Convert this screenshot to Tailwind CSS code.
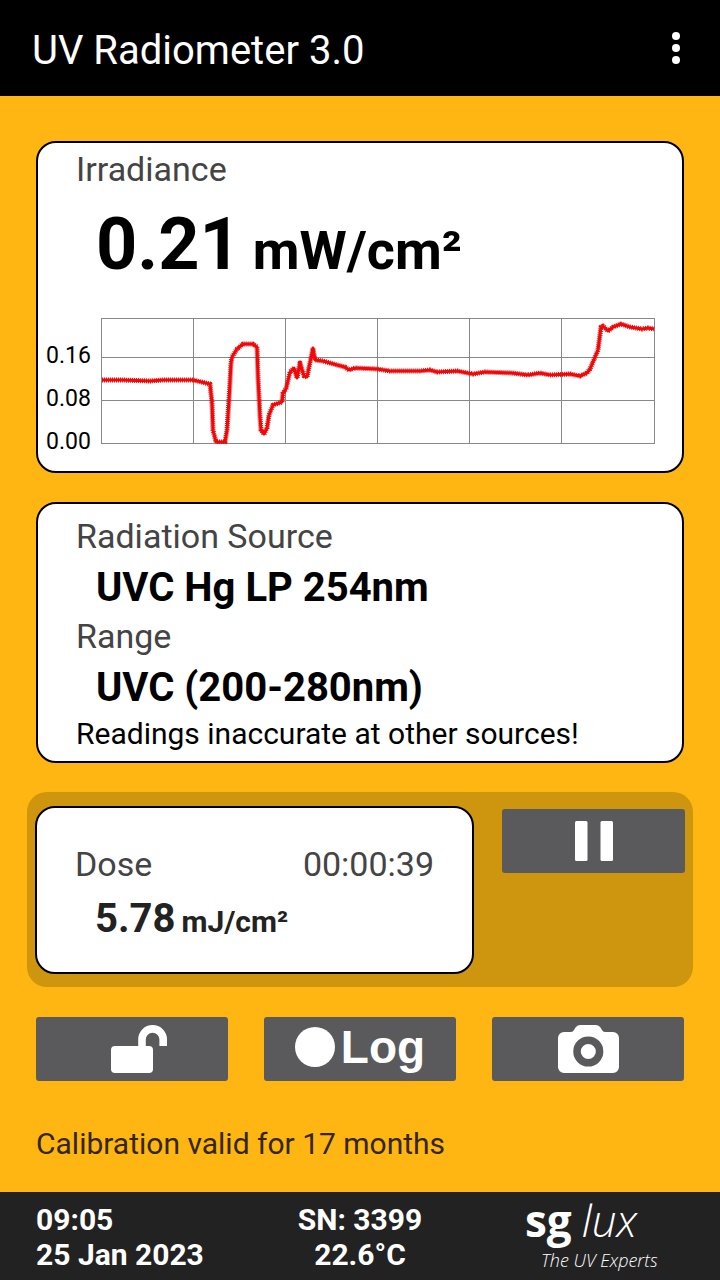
<!DOCTYPE html>
<html lang="en">
<head>
<meta charset="utf-8">
<meta name="viewport" content="width=device-width, initial-scale=1">
<title>UV Radiometer 3.0</title>
<script src="https://cdn.jsdelivr.net/npm/@tailwindcss/browser@4"></script>
</head>
<body class="flex min-h-screen flex-col bg-[#ffb612] font-['Roboto',sans-serif] text-black">
  <header class="flex h-24 items-center justify-between bg-black pl-8 pr-6 text-white">
    <h1 class="pt-1.5 text-[40px] leading-[48px]">UV Radiometer 3.0</h1>
    <button type="button" aria-label="More options" class="flex h-12 w-10 items-center justify-center">
      <svg class="h-8 w-2" viewBox="0 0 8 32" fill="currentColor" aria-hidden="true"><circle cx="4" cy="4" r="4"/><circle cx="4" cy="16" r="4"/><circle cx="4" cy="28" r="4"/></svg>
    </button>
  </header>

  <main class="flex flex-1 flex-col px-9 pt-[45px]">
    <section class="rounded-[20px] border-2 border-black bg-white pt-1.5 pb-[27px]">
      <h2 class="pl-[38px] text-[34px] leading-10 text-[#444]">Irradiance</h2>
      <p class="mt-3.5 pl-[58px] text-[72px] leading-[84px] font-bold">0.21 <span class="-ml-1.5 text-[54px] leading-none">mW/cm²</span></p>
      <div class="mt-[31px] flex pr-[27px]">
        <div class="-mb-5 w-[63px] shrink-0 pt-4 pl-2 text-[23px] leading-[43px]">
          <div>0.16</div><div>0.08</div><div>0.00</div>
        </div>
        <svg class="min-w-0 flex-1 self-start" viewBox="0 0 554 126" fill="none" role="img" aria-label="Irradiance over time">
          <path stroke="#888" d="M0 .5H554M0 39.5H554M0 82.5H554M0 125.5H554M.5 0V126M92.5 0V126M184.5 0V126M276.5 0V126M368.5 0V126M460.5 0V126M553.5 0V126"/>
          <path stroke="#f00808" stroke-width="3" stroke-linejoin="round" d="M1 62 21 62 49 63 62 62 92 62 109 66 111 85 112 112 115 124 124 124 126 112 128 82 130 45 131 39 136 31 142 26 152 26 156 29 157 59 159 99 160 112 163 116 166 110 168 97 172 87 181 84 182 75 185 71 189 54 193 50 196 60 199 45 203 58 206 59 212 30 214 42 222 43 236 47 244 49 248 52 254 50 276 51 289 53 319 53 329 52 336 54 356 53 372 56 384 54 411 55 427 57 439 55 449 57 469 56 479 58 486 55 489 51 497 32 500 9 502 8 507 13 512 9 520 6 529 9 541 11 547 10 553 11"/>
          <path stroke="#f00808" stroke-width="5" stroke-dasharray="1 1" stroke-linejoin="round" d="M1 62 21 62 49 63 62 62 92 62 109 66 111 85 112 112 115 124 124 124 126 112 128 82 130 45 131 39 136 31 142 26 152 26 156 29 157 59 159 99 160 112 163 116 166 110 168 97 172 87 181 84 182 75 185 71 189 54 193 50 196 60 199 45 203 58 206 59 212 30 214 42 222 43 236 47 244 49 248 52 254 50 276 51 289 53 319 53 329 52 336 54 356 53 372 56 384 54 411 55 427 57 439 55 449 57 469 56 479 58 486 55 489 51 497 32 500 9 502 8 507 13 512 9 520 6 529 9 541 11 547 10 553 11"/>
        </svg>
      </div>
    </section>

    <section class="mt-[29px] rounded-[20px] border-2 border-black bg-white pt-2 pb-[5px] pl-[38px]">
      <h2 class="mb-1 text-[34px] leading-[48px] text-[#444]">Radiation Source</h2>
      <p class="pl-5 text-[40px] leading-[48px] font-bold">UVC Hg LP 254nm</p>
      <h2 class="mb-1 text-[34px] leading-[48px] text-[#444]">Range</h2>
      <p class="pl-5 text-[40px] leading-[48px] font-bold">UVC (200-280nm)</p>
      <p class="text-[30px] leading-[44px]">Readings inaccurate at other sources!</p>
    </section>

    <section class="-mx-[9px] mt-[29px] flex items-start gap-7 rounded-[20px] bg-[#ce950e] pt-3.5 pr-2 pb-[13px] pl-2">
      <div class="flex-1 rounded-[20px] border-2 border-black bg-white pt-[31px] pr-[38px] pb-[23px] pl-[38px]">
        <div class="flex justify-between text-[34px] leading-[50px] text-[#444]"><h2>Dose</h2><time>00:00:39</time></div>
        <p class="pl-5 text-[40px] leading-[60px] font-bold text-[#222]">5.78 <span class="-ml-1 text-[30px] leading-none">mJ/cm²</span></p>
      </div>
      <button type="button" aria-label="Pause" class="mt-[3px] flex h-16 w-[183px] items-center justify-center rounded-[3px] bg-[#5a5a5c] text-white">
        <svg class="h-10 w-[38px]" viewBox="0 0 38 40" fill="currentColor" aria-hidden="true"><rect width="12.5" height="40" rx="1.5"/><rect x="25.5" width="12.5" height="40" rx="1.5"/></svg>
      </button>
    </section>

    <div class="mt-[30px] grid grid-cols-3 gap-9 text-white">
      <button type="button" aria-label="Unlock" class="flex h-16 items-center justify-center rounded-[3px] bg-[#5a5a5c]">
        <svg class="h-12 w-[69px]" viewBox="-13 0 69 48" aria-hidden="true"><rect y="21" width="42" height="27" rx="4" fill="currentColor"/><path d="M31 23V14.5a10.6 10.6 0 0 1 21.2 0V21" fill="none" stroke="currentColor" stroke-width="7.6"/></svg>
      </button>
      <button type="button" class="flex h-16 items-center justify-center gap-1.5 rounded-[3px] bg-[#5a5a5c] pb-1 font-['Liberation_Sans',sans-serif] text-[46px] leading-[60px] font-bold">
        <svg class="size-10" viewBox="0 0 40 40" fill="currentColor" aria-hidden="true"><circle cx="20" cy="20" r="20"/></svg>
        Log
      </button>
      <button type="button" aria-label="Take screenshot" class="flex h-16 items-center justify-center rounded-[3px] bg-[#5a5a5c]">
        <svg class="h-12 w-[61px]" viewBox="0 0 61 48" aria-hidden="true"><path fill="currentColor" d="M6 7H13Q15 7 16 5L17.5 2.500Q19 0 22 0H38Q41 0 42.500 2.500L44 5Q45 7 47 7H55A6 6 0 0 1 61 13V42A6 6 0 0 1 55 48H6A6 6 0 0 1 0 42V13A6 6 0 0 1 6 7Z"/><circle cx="30.300" cy="26.500" r="11.300" fill="none" stroke="#5a5a5c" stroke-width="7.500"/></svg>
      </button>
    </div>

    <p class="mt-auto pt-8 pb-[30px] text-[30px] leading-9 text-[#33260a]">Calibration valid for 17 months</p>
  </main>

  <footer class="grid h-[88px] grid-cols-3 bg-[#222] px-9 pt-2.5 text-[30px] leading-[35px] font-bold text-white">
    <div>09:05<br><span class="whitespace-nowrap">25 Jan 2023</span></div>
    <div class="text-center">SN: 3399<br>22.6°C</div>
    <div class="pl-[57px] font-['Open_Sans',sans-serif] whitespace-nowrap">
      <div class="flex items-baseline gap-2.5 text-[44px] leading-9"><span>sg</span><span class="font-light italic">lux</span></div>
      <div class="mt-2.5 pl-4 text-[18px] leading-6 font-light italic">The UV Experts</div>
    </div>
  </footer>
</body>
</html>
